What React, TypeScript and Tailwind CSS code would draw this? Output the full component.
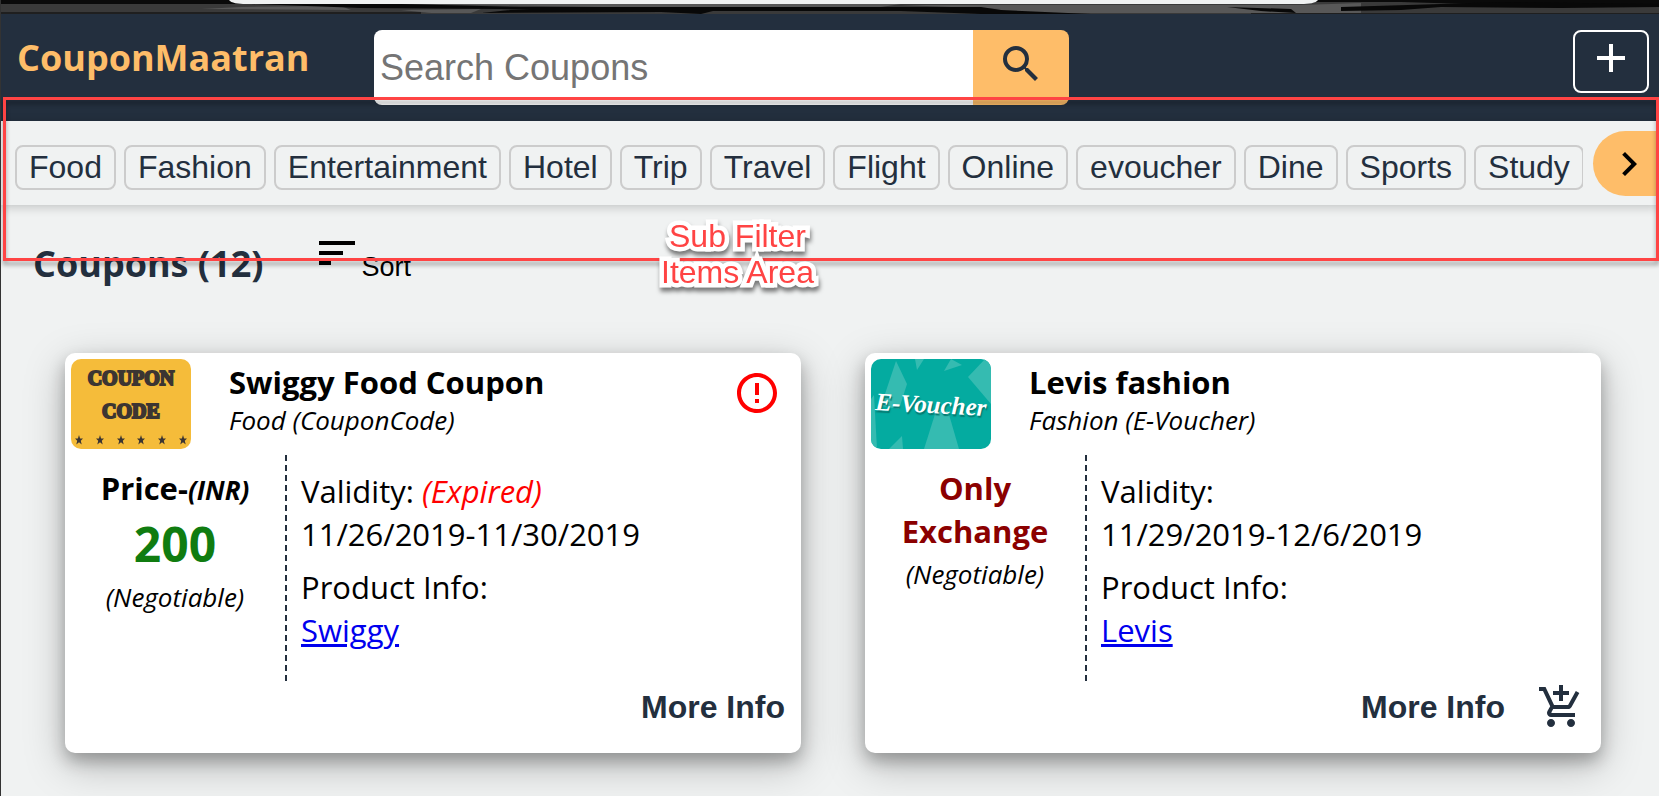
import React from "react";
import { MdSearch, MdAdd, MdSort, MdChevronRight, MdErrorOutline, MdAddShoppingCart } from "react-icons/md";

const filters = ["Food", "Fashion", "Entertainment", "Hotel", "Trip", "Travel", "Flight", "Online", "evoucher", "Dine", "Sports", "Study"];

function CouponCodeArt() {
  return (
    <div className="flex h-[90px] w-[120px] shrink-0 flex-col items-center overflow-hidden rounded-[10px] bg-[#f5bc3a] pt-[3px] font-['Liberation_Serif',serif] text-[20px] leading-[33px] font-bold text-[#3c3532]">
      <span className="[-webkit-text-stroke:2px_#3c3532] [paint-order:stroke_fill]">COUPON</span>
      <span className="[-webkit-text-stroke:2px_#3c3532] [paint-order:stroke_fill]">CODE</span>
      <svg viewBox="0 0 120 12" className="mt-[6px] w-full" fill="#3c3532" aria-hidden="true">
        {[8, 29, 50, 70, 91, 112].map((x) => (
          <path key={x} transform={`translate(${x} 6)`} d="M0-5L1.1-1.4H4L1.8.8 2.7 4.6 0 2.3-2.7 4.6-1.8.8-4-1.4H-1.1Z" />
        ))}
      </svg>
    </div>
  );
}

function VoucherArt() {
  return (
    <div className="relative h-[90px] w-[120px] shrink-0 overflow-hidden rounded-[10px] bg-[#04aba0]">
      <svg viewBox="0 0 120 90" className="size-full" fill="#35bbb1" aria-hidden="true">
        <path d="M25 2L36 25 28 50 10 47Z" />
        <path d="M44 0H53L46 11Z" />
        <path d="M80 0L91 6 73 12Z" />
        <path d="M114 0L97 18 120 45V0Z" />
        <path d="M3 36L0 40V90H6Z" />
        <path d="M65 52H77L88 90H53Z" />
        <path d="M31 77L18 90H32Z" />
      </svg>
      <span className="absolute inset-0 flex rotate-3 items-center justify-center font-['Liberation_Serif',serif] text-[25px] leading-none font-bold text-white italic [text-shadow:1px_2px_1px_#067970]">
        E-Voucher
      </span>
    </div>
  );
}

type CardProps = {
  art: React.ReactNode;
  title: string;
  kind: string;
  price: React.ReactNode;
  dates: string;
  product: string;
  expired?: boolean;
};

function CouponCard({ art, title, kind, price, dates, product, expired }: CardProps) {
  return (
    <article className="flex min-h-[400px] flex-col rounded-[10px] bg-white text-[31px] leading-[43px] text-black shadow-[0_8px_16px_rgba(0,0,0,0.25),0_12px_40px_rgba(0,0,0,0.25)]">
      <header className="flex items-start pt-[6px] pl-[6px]">
        {art}
        <div className="ml-[38px] pt-[2px]">
          <h2 className="font-bold">{title}</h2>
          <p className="text-[26px] leading-[32px] italic">{kind}</p>
        </div>
        {expired && <MdErrorOutline className="mt-[10px] mr-5 ml-auto size-12 text-[#ff0000]" aria-label="Expired" />}
      </header>
      <div className="mt-[6px] flex h-[226px]">
        <div className="w-[220px] shrink-0 pt-3 text-center">
          {price}
          <p className="text-[26px] italic">(Negotiable)</p>
        </div>
        <div className="border-l-2 border-dashed border-[#232f3e] pt-[15px] pl-[14px]">
          <p>Validity: {expired && <i className="text-[#ff0000]">(Expired)</i>}</p>
          <p>{dates}</p>
          <p className="mt-[10px]">Product Info:</p>
          <a href="#product" className="text-[#0000ee] underline">{product}</a>
        </div>
      </div>
      <footer className="flex items-center justify-end pr-4 font-['Liberation_Sans',sans-serif] text-[32px] leading-[52px] font-bold text-[#232f3e]">
        <button type="button">More Info</button>
        {!expired && (
          <button type="button" aria-label="Add to cart" className="ml-8">
            <MdAddShoppingCart className="size-12" />
          </button>
        )}
      </footer>
    </article>
  );
}

function TopStrip() {
  return (
    <div className="h-[14px] bg-[#3a3a3a]">
      <svg viewBox="0 0 1658 14" preserveAspectRatio="none" className="h-full w-full" aria-hidden="true">
        <path fill="#0a0a0a" d="M0 0H250V4H0ZM1300 0H1658V6L1500 5 1400 2H1300Z" />
        <path fill="#1f1f1f" d="M0 12H420V14H0ZM1250 13H1658V14H1250Z" />
        <path fill="#585858" d="M240 7L340 6 350 10 200 9ZM400 10L480 9 470 13 430 13ZM400 4H900L880 7H600ZM900 5H1300L1360 3V13H970L1000 9Z" />
        <path fill="#080808" d="M250 4H400L520 7H980L1000 10 1090 14H980L900 11H560L500 9 360 8ZM480 13L520 9 600 8 720 9 700 14 660 12ZM1226 7L1290 9 1295 13 1260 11ZM1340 7L1440 4 1500 2 1658 4V7L1560 8 1440 7 1400 10 1340 11Z" />
        <path fill="#f0f2f2" d="M228 0H1317C1315 3 1308 4 1300 4H245C237 4 230 3 228 0Z" />
      </svg>
    </div>
  );
}

export default function App() {
  return (
    <div className="relative min-h-screen overflow-hidden border-l border-[#333] bg-[#f0f2f2] font-['Open_Sans',sans-serif]">
      <TopStrip />
      <header className="flex h-[107px] items-start bg-[#232f3e] pt-4 pr-[10px] pl-4">
        <h1 className="w-[333px] shrink-0 pt-[3px] text-[36px] leading-[50px] font-bold text-[#febd69]">CouponMaatran</h1>
        <form className="ml-6 flex h-[75px] w-[695px] overflow-hidden rounded-[8px]">
          <input aria-label="Search Coupons" placeholder="Search Coupons" className="min-w-0 flex-1 bg-white px-[6px] font-['Liberation_Sans',sans-serif] text-[36px] placeholder:text-[#757575]" />
          <button type="button" aria-label="Search" className="flex w-24 justify-center bg-[#febd69] pt-[10px] text-[#232f3e]">
            <MdSearch className="size-12" />
          </button>
        </form>
        <button type="button" aria-label="Add coupon" className="ml-auto flex h-[63px] w-[76px] justify-center rounded-[8px] border-2 border-white pt-[2px] text-white">
          <MdAdd className="size-12" />
        </button>
      </header>
      <nav className="relative flex h-[84px] items-start bg-[#f0f2f2] pt-[10px] shadow-[0_2px_10px_rgba(0,0,0,0.2)]">
        <div className="mr-[10px] ml-[14px] flex min-w-0 flex-1 gap-2 overflow-hidden pt-[14px] font-['Liberation_Sans',sans-serif] text-[32px] text-[#232f3e]">
          {filters.map((f) => (
            <button key={f} type="button" className="h-[45px] shrink-0 rounded-[8px] border-2 border-[#cccccc] px-3 leading-[39px]">{f}</button>
          ))}
        </div>
        <button type="button" aria-label="More filters" className="flex h-[65px] w-[66px] shrink-0 items-center justify-center rounded-l-full bg-[#febd69] pl-[6px] text-black">
          <MdChevronRight className="size-12" />
        </button>
      </nav>
      <main className="pt-[34px]">
        <div className="flex h-[50px] items-start pl-8">
          <h2 className="text-[36px] leading-[50px] font-bold text-[#232f3e]">Coupons (12)</h2>
          <button type="button" className="-mt-[10px] ml-[50px] flex items-start font-['Liberation_Sans',sans-serif] text-[27px] leading-[36px] text-black">
            <MdSort className="size-12" />
            <span className="pt-5">Sort</span>
          </button>
        </div>
        <div className="grid grid-cols-2 gap-16 pt-16 pr-[58px] pb-16 pl-16">
          <CouponCard
            art={<CouponCodeArt />}
            title="Swiggy Food Coupon"
            kind="Food (CouponCode)"
            dates="11/26/2019-11/30/2019"
            product="Swiggy"
            expired
            price={
              <>
                <p className="font-bold">Price-<i className="text-[26px]">(INR)</i></p>
                <p className="text-[48px] leading-[64px] font-bold text-[#107c10]">200</p>
              </>
            }
          />
          <CouponCard
            art={<VoucherArt />}
            title="Levis fashion"
            kind="Fashion (E-Voucher)"
            dates="11/29/2019-12/6/2019"
            product="Levis"
            price={<p className="px-8 font-bold text-[#8b0000]">Only Exchange</p>}
          />
        </div>
      </main>
      <div className="pointer-events-none absolute top-[97px] right-0 left-[2px] h-[164px] border-[3px] border-[#ff4444] drop-shadow-[0_4px_2px_rgba(0,0,0,0.35)]" />
      <p className="pointer-events-none absolute top-[218px] left-[660px] text-center font-['Liberation_Sans',sans-serif] text-[32px] leading-[36px] text-[#ff4444] drop-shadow-[1px_4px_2px_rgba(0,0,0,0.5)] [-webkit-text-stroke:9px_white] [paint-order:stroke_fill] [stroke-linejoin:round]">
        Sub Filter<br />Items Area
      </p>
    </div>
  );
}
